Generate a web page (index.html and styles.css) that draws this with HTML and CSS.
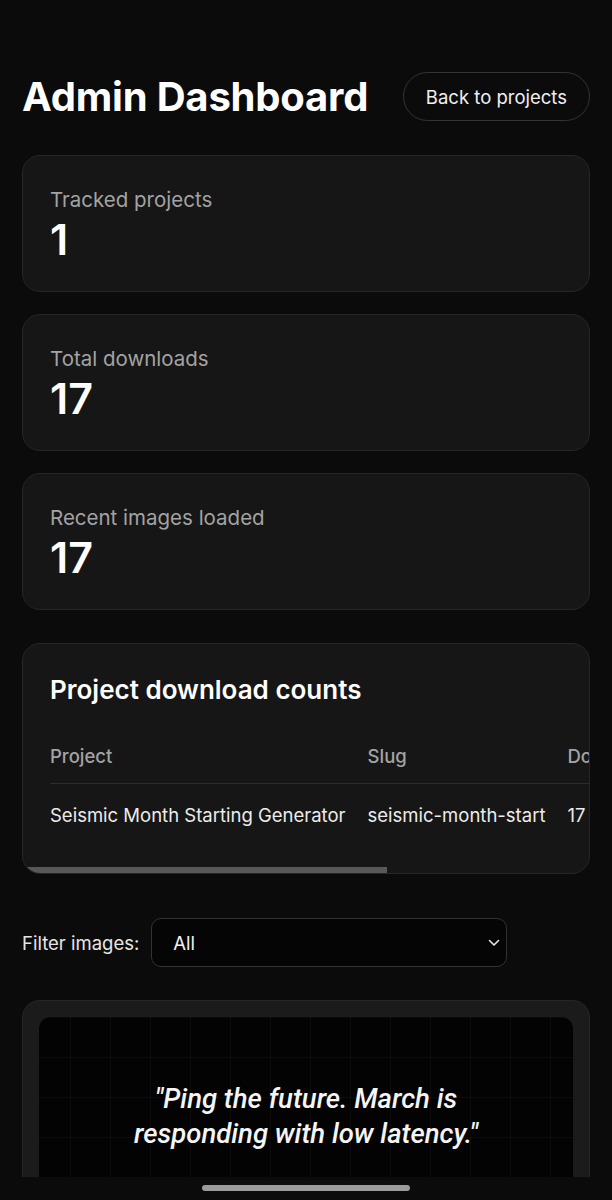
FILE: index.html
```html
<!DOCTYPE html>
<html lang="en">
<head>
<meta charset="utf-8">
<title>Admin Dashboard</title>
<link rel="stylesheet" href="styles.css">
</head>
<body>
<main class="page">
  <header class="header">
    <h1 class="title">Admin Dashboard</h1>
    <a class="back-btn" href="#">Back to projects</a>
  </header>

  <section class="stat-card">
    <div class="stat-label">Tracked projects</div>
    <div class="stat-value">1</div>
  </section>
  <section class="stat-card">
    <div class="stat-label">Total downloads</div>
    <div class="stat-value">17</div>
  </section>
  <section class="stat-card">
    <div class="stat-label">Recent images loaded</div>
    <div class="stat-value">17</div>
  </section>

  <section class="table-card">
    <h2 class="table-title">Project download counts</h2>
    <table class="counts">
      <thead>
        <tr><th>Project</th><th>Slug</th><th class="col-dl">Downloads</th></tr>
      </thead>
      <tbody>
        <tr><td>Seismic Month Starting Generator</td><td>seismic-month-start</td><td class="col-dl">17</td></tr>
      </tbody>
    </table>
    <span class="scroll-thumb"></span>
  </section>

  <div class="filter-row">
    <label class="filter-label" for="filter">Filter images:</label>
    <div class="select-wrap">
      <select id="filter" class="filter-select"><option>All</option></select>
      <svg class="chev" width="12" height="8" viewBox="0 0 12 8"><path d="M1.5 1.5 L6 6 L10.5 1.5" fill="none" stroke="#e6e6e6" stroke-width="1.6" stroke-linecap="round" stroke-linejoin="round"/></svg>
    </div>
  </div>

  <section class="image-card">
    <div class="image-inner">
      <p class="quote">"Ping the future. March is<br>responding with low latency."</p>
    </div>
  </section>
</main>
<div class="nav-bar"><span class="home-pill"></span></div>
</body>
</html>
```

FILE: styles.css
```css
* { box-sizing: border-box; }
html, body { margin: 0; padding: 0; background: #0b0b0b; }
body {
  font-family: Inter, "Noto Sans", "Liberation Sans", sans-serif;
  color: #f2f2f2;
  height: 1200px;
  overflow: hidden;
}
.page {
  padding: 72px 22px 0;
  display: flex;
  flex-direction: column;
}
.header {
  display: flex;
  align-items: center;
  justify-content: space-between;
  height: 49px;
  margin-bottom: 34px;
}
.title {
  margin: 0;
  font-size: 40px;
  font-weight: 700;
  letter-spacing: -0.2px;
  color: #ffffff;
}
.back-btn {
  display: flex;
  align-items: center;
  height: 49px;
  padding: 0 22px;
  border: 1px solid #343434;
  border-radius: 25px;
  color: #f0f0f0;
  text-decoration: none;
  font-size: 18.5px;
}
.stat-card {
  background: #161616;
  border: 1px solid #262626;
  border-radius: 18px;
  padding: 30px 27px 0;
  height: 137px;
  margin-bottom: 22px;
}
.stat-label {
  font-size: 20.5px;
  line-height: 28px;
  color: #a3a3a3;
}
.stat-value {
  font-size: 43px;
  line-height: 50px;
  font-weight: 600;
  color: #ffffff;
}
.table-card {
  position: relative;
  margin-top: 11px;
  background: #161616;
  border: 1px solid #262626;
  border-radius: 18px;
  padding: 30px 27px 28px;
  overflow: hidden;
}
.scroll-thumb {
  position: absolute;
  left: 0;
  bottom: 0;
  width: 364px;
  height: 6px;
  background: #585858;
}
.table-title {
  margin: 0 0 23px;
  font-size: 26px;
  line-height: 32px;
  font-weight: 600;
  color: #ffffff;
}
.counts {
  border-collapse: collapse;
  white-space: nowrap;
  font-size: 18.5px;
  line-height: 24px;
}
.counts th {
  text-align: left;
  font-weight: 500;
  color: #a3a3a3;
  padding: 15px 22px 15px 0;
  border-bottom: 1px solid #2c2c2c;
}
.counts td {
  color: #ececec;
  padding: 19px 22px 18px 0;
}
.counts .col-dl { min-width: 290px; }
.filter-row {
  display: flex;
  align-items: center;
  gap: 12px;
  margin-top: 44px;
  margin-bottom: 33px;
}
.filter-label {
  font-size: 18.5px;
  color: #e6e6e6;
}
.select-wrap {
  position: relative;
  width: 356px;
}
.filter-select {
  appearance: none;
  -webkit-appearance: none;
  width: 100%;
  height: 49px;
  background: #050505;
  color: #f2f2f2;
  border: 1px solid #333333;
  border-radius: 10px;
  padding: 0 21px;
  font-family: inherit;
  font-size: 18.5px;
}
.chev {
  position: absolute;
  right: 7px;
  top: 21px;
  pointer-events: none;
}
.image-card {
  background: #1b1b1b;
  border: 1px solid #262626;
  border-bottom: none;
  border-radius: 18px 18px 0 0;
  padding: 16px 16px 0;
  height: 200px;
}
.image-inner {
  height: 100%;
  background-color: #030303;
  background-image:
    linear-gradient(rgba(255,255,255,0.03) 1px, transparent 1px),
    linear-gradient(90deg, rgba(255,255,255,0.03) 1px, transparent 1px);
  background-size: 40px 40px;
  background-position: 31px 0;
  border-radius: 12px 12px 0 0;
  padding-top: 64px;
}
.quote {
  margin: 0;
  text-align: center;
  font-family: Roboto, "Liberation Sans", sans-serif;
  font-style: italic;
  font-weight: 500;
  font-size: 27.5px;
  line-height: 35px;
  color: #f5f5f5;
}
.nav-bar {
  position: fixed;
  left: 0;
  right: 0;
  bottom: 0;
  height: 23px;
  background: #0b0b0b;
  display: flex;
  justify-content: center;
  align-items: center;
}
.home-pill {
  width: 208px;
  height: 6px;
  border-radius: 3px;
  background: #9b9b9b;
  margin-top: -1px;
}
```
